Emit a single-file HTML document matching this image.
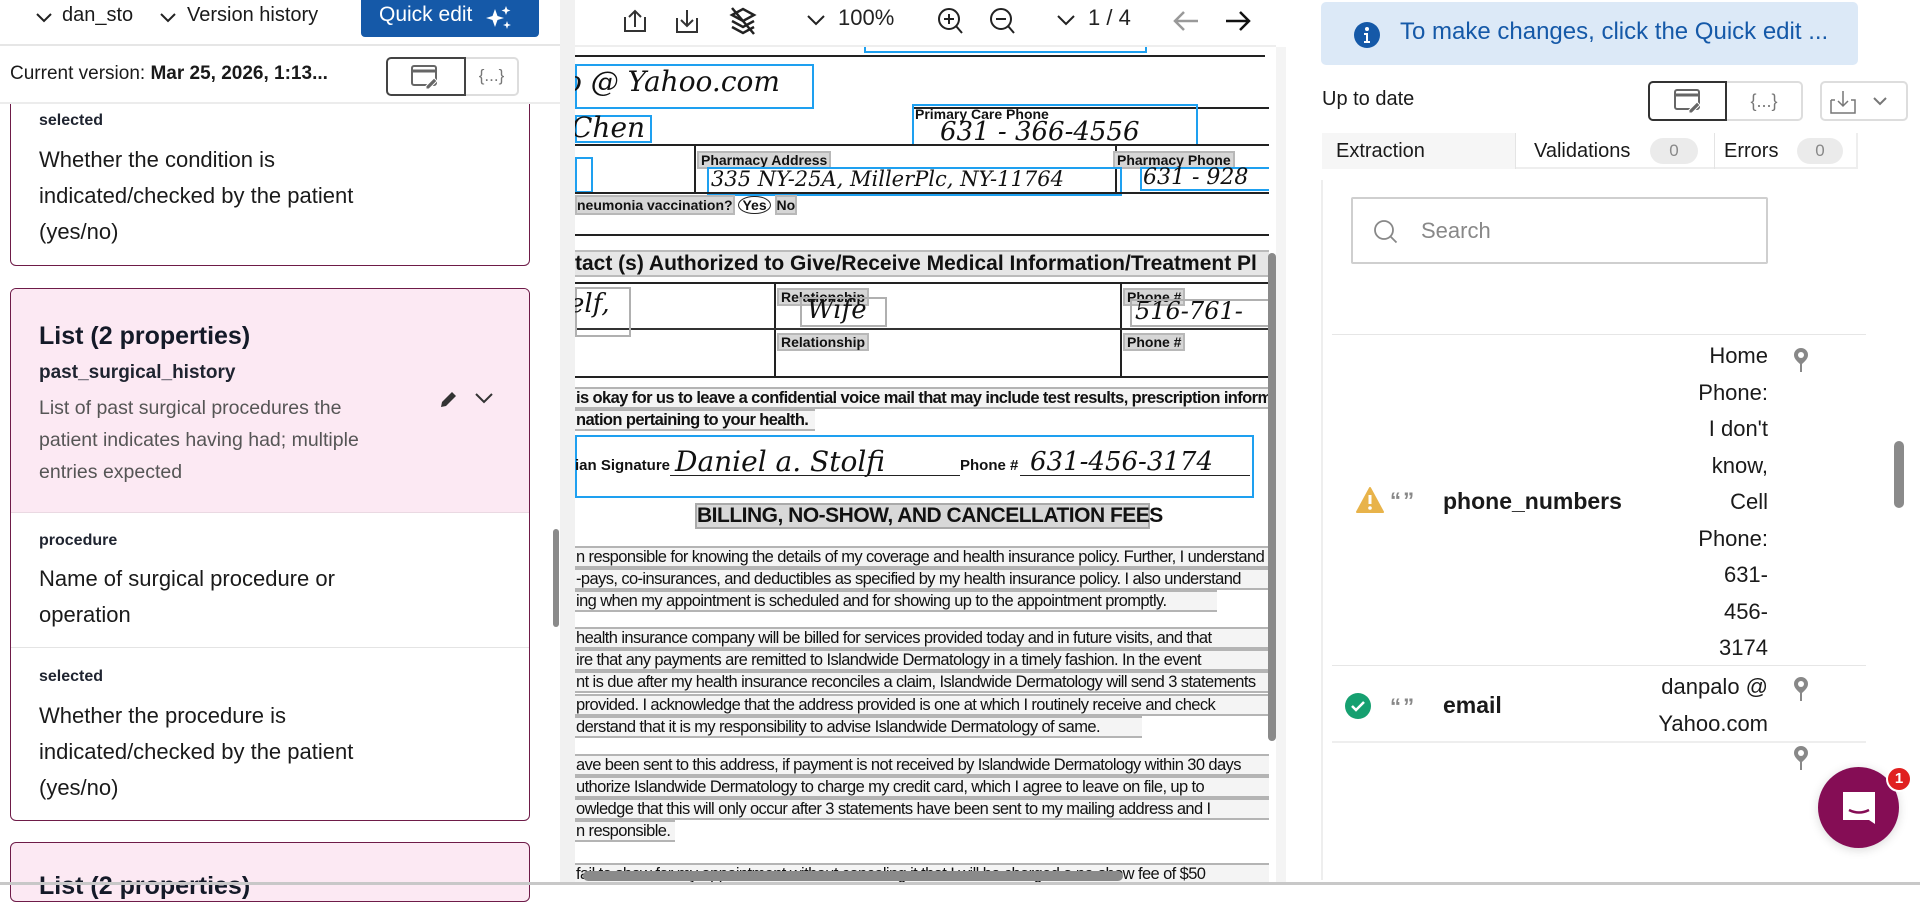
<!DOCTYPE html>
<html><head><meta charset="utf-8">
<style>
*{box-sizing:border-box;margin:0;padding:0}
body{width:1920px;height:885px;overflow:hidden;background:#fff;font-family:"Liberation Sans",sans-serif;color:#1a1a1a;position:relative}
.a{position:absolute;white-space:nowrap}
.doc{position:absolute;left:575px;top:47px;width:694px;height:838px;overflow:hidden;background:#fff}
.d{position:absolute;white-space:nowrap;font-family:"Liberation Sans Narrow","Liberation Sans",sans-serif;font-weight:bold;color:#111}
.hl{background:#d6d6d6;border:2px solid #b8b8b8}
.bl{position:absolute;border:2px solid #1ea0f0}
.gb{position:absolute;border:2px solid #b0b0b0}
.hw{position:absolute;white-space:nowrap;font-family:"DejaVu Serif","Liberation Serif",serif;font-style:italic;color:#111}
.ln{position:absolute;background:#222;height:2px}
.pl{position:absolute;left:0;height:22px;font-family:"Liberation Sans Narrow","Liberation Sans",sans-serif;font-size:16.5px;letter-spacing:-0.6px;line-height:18px;color:#111;white-space:nowrap;border-top:2px solid #b4b4b4;border-bottom:2px solid #b4b4b4;background:#f4f4f4;padding-left:1px;overflow:hidden}
.lbl{font-size:16px;font-weight:bold;color:#1f2430}
.txt{font-size:22px;line-height:36px;color:#1a1a1a}
</style></head><body>

<!-- LEFT PANEL -->
<div class="a" style="left:0;top:0;width:560px;height:46px;border-bottom:2px solid #e6e6e6"></div>
<svg class="a" style="left:34px;top:8px" width="20" height="20" viewBox="0 0 20 20"><path d="M3 6l7 7 7-7" fill="none" stroke="#222" stroke-width="2"/></svg>
<div class="a" style="left:62px;top:4px;font-size:20px;width:72px;overflow:hidden">dan_stolfi</div>
<svg class="a" style="left:158px;top:8px" width="20" height="20" viewBox="0 0 20 20"><path d="M3 6l7 7 7-7" fill="none" stroke="#222" stroke-width="2"/></svg>
<div class="a" style="left:187px;top:4px;font-size:20px">Version history</div>
<div class="a" style="left:361px;top:0;width:178px;height:37px;background:#1559a8;border-radius:0 0 4px 4px;color:#fff;font-size:21px;padding:3px 0 0 18px">Quick edit
<svg style="position:absolute;left:124px;top:5px" width="28" height="26" viewBox="0 0 28 26"><path d="M10 4 L12.5 11 L19 13 L12.5 15 L10 22 L7.5 15 L1 13 L7.5 11Z" fill="#fff"/><path d="M21 1 L22.2 4.3 L25.5 5.5 L22.2 6.7 L21 10 L19.8 6.7 L16.5 5.5 L19.8 4.3Z" fill="#fff"/><path d="M22 16 L23 19 L26 20 L23 21 L22 24 L21 21 L18 20 L21 19Z" fill="#fff"/></svg></div>

<div class="a" style="left:0;top:47px;width:560px;height:57px;border-bottom:2px solid #ececec"></div>
<div class="a" style="left:10px;top:63px;font-size:19px">Current version: <b>Mar 25, 2026, 1:13...</b></div>
<div class="a" style="left:386px;top:57px;width:80px;height:39px;border:2px solid #444;border-radius:5px 0 0 5px"></div>
<svg class="a" style="left:410px;top:64px" width="30" height="26" viewBox="0 0 30 26"><rect x="2" y="2" width="24" height="19" rx="2" fill="none" stroke="#666" stroke-width="2"/><path d="M2 7h24" stroke="#666" stroke-width="3"/><path d="M16 22l8-8 3 3-8 8h-3z" fill="#666" stroke="#fff" stroke-width="1"/></svg>
<div class="a" style="left:466px;top:57px;width:53px;height:39px;border:2px solid #ddd;border-left:none;border-radius:0 5px 5px 0;color:#777;font-size:17px;text-align:center;line-height:34px">{...}</div>

<div class="a" style="left:10px;top:104px;width:520px;height:162px;border:1.5px solid #6e1b48;border-top:none;border-radius:0 0 6px 6px"></div>
<div class="a lbl" style="left:39px;top:112px">selected</div>
<div class="a txt" style="left:39px;top:142px">Whether the condition is<br>indicated/checked by the patient<br>(yes/no)</div>

<div class="a" style="left:10px;top:288px;width:520px;height:533px;border:1.5px solid #6e1b48;border-radius:6px;overflow:hidden">
 <div style="position:absolute;left:0;top:0;width:100%;height:224px;background:#fce9f3;border-bottom:1px solid #ead9e2"></div>
 <div class="a" style="left:28px;top:33px;font-size:25px;font-weight:bold;color:#141a28">List (2 properties)</div>
 <div class="a" style="left:28px;top:73px;font-size:19px;font-weight:bold;color:#1f2430">past_surgical_history</div>
 <div class="a" style="left:28px;top:103px;font-size:19.5px;line-height:32px;color:#555">List of past surgical procedures the<br>patient indicates having had; multiple<br>entries expected</div>
 <svg class="a" style="left:428px;top:100px" width="20" height="20" viewBox="0 0 20 20"><path d="M2 18l1-5 10-10 4 4-10 10z" fill="#333"/></svg>
 <svg class="a" style="left:463px;top:101px" width="20" height="16" viewBox="0 0 20 16"><path d="M2 4l8 8 8-8" fill="none" stroke="#333" stroke-width="2"/></svg>
 <div class="a lbl" style="left:28px;top:243px">procedure</div>
 <div class="a txt" style="left:28px;top:272px">Name of surgical procedure or<br>operation</div>
 <div style="position:absolute;left:0;top:358px;width:100%;height:1px;background:#e4e4e4"></div>
 <div class="a lbl" style="left:28px;top:379px">selected</div>
 <div class="a txt" style="left:28px;top:409px">Whether the procedure is<br>indicated/checked by the patient<br>(yes/no)</div>
</div>
<div class="a" style="left:10px;top:842px;width:520px;height:60px;border:1.5px solid #6e1b48;border-radius:6px;background:#fce9f3"></div>
<div class="a" style="left:39px;top:872px;font-size:25px;font-weight:bold;color:#141a28">List (2 properties)</div>

<!-- gutters -->
<div class="a" style="left:560px;top:0;width:15px;height:885px;background:#f1f1f1"></div>
<div class="a" style="left:553px;top:529px;width:6px;height:98px;background:#8a8a8a;border-radius:3px"></div>
<div class="a" style="left:1269px;top:0;width:53px;height:885px;background:#fff"></div>
<div class="a" style="left:1276px;top:47px;width:10px;height:838px;background:#f4f4f4"></div>

<!-- DOC TOOLBAR -->
<div class="a" style="left:575px;top:0;width:701px;height:47px;background:#fff;border-bottom:2px solid #eee"></div>
<svg class="a" style="left:620px;top:7px" width="30" height="30" viewBox="0 0 30 30"><path d="M5 10v14h20V10" fill="none" stroke="#333" stroke-width="2"/><path d="M9 10l6-6 6 6M15 4v16" fill="none" stroke="#333" stroke-width="2"/></svg>
<svg class="a" style="left:672px;top:6px" width="30" height="30" viewBox="0 0 30 30"><path d="M5 12v14h20V12" fill="none" stroke="#333" stroke-width="2"/><path d="M9 14l6 6 6-6M15 4v16" fill="none" stroke="#333" stroke-width="2"/></svg>
<svg class="a" style="left:728px;top:5px" width="30" height="32" viewBox="0 0 30 32"><path d="M4 10l11-6 11 6-11 6z M4 16l11 6 11-6 M4 22l11 6 11-6" fill="none" stroke="#222" stroke-width="2.5"/><path d="M4 3l22 26" stroke="#222" stroke-width="2.5"/></svg>
<svg class="a" style="left:805px;top:10px" width="22" height="20" viewBox="0 0 22 20"><path d="M3 6l8 8 8-8" fill="none" stroke="#222" stroke-width="2"/></svg>
<div class="a" style="left:838px;top:5px;font-size:22px;color:#222">100%</div>
<svg class="a" style="left:935px;top:5px" width="34" height="34" viewBox="0 0 34 34"><circle cx="14" cy="14" r="10" fill="none" stroke="#222" stroke-width="2"/><path d="M14 9v10M9 14h10M21 21l6 7" stroke="#222" stroke-width="2"/></svg>
<svg class="a" style="left:987px;top:5px" width="34" height="34" viewBox="0 0 34 34"><circle cx="14" cy="14" r="10" fill="none" stroke="#222" stroke-width="2"/><path d="M9 14h10M21 21l6 7" stroke="#222" stroke-width="2"/></svg>
<svg class="a" style="left:1055px;top:10px" width="22" height="20" viewBox="0 0 22 20"><path d="M3 6l8 8 8-8" fill="none" stroke="#222" stroke-width="2"/></svg>
<div class="a" style="left:1088px;top:5px;font-size:22px;color:#222">1 / 4</div>
<svg class="a" style="left:1170px;top:6px" width="32" height="30" viewBox="0 0 32 30"><path d="M28 15H5M14 6l-9 9 9 9" fill="none" stroke="#999" stroke-width="2.5"/></svg>
<svg class="a" style="left:1222px;top:6px" width="32" height="30" viewBox="0 0 32 30"><path d="M4 15h23M18 6l9 9-9 9" fill="none" stroke="#111" stroke-width="2.5"/></svg>

<!-- DOC -->
<div class="doc">
 <div class="ln" style="left:0;top:8px;width:690px"></div>
 <div class="bl" style="left:289px;top:-14px;width:283px;height:20px"></div>
 <div class="bl" style="left:0;top:17px;width:239px;height:45px"></div>
 <div class="hw" style="left:-10px;top:18px;font-size:28px">o @ Yahoo.com</div>
 <div class="ln" style="left:337px;top:60px;width:360px"></div>
 <div class="ln" style="left:337px;top:60px;width:2px;height:38px"></div>
 <div class="bl" style="left:337px;top:57px;width:286px;height:42px"></div>
 <div class="d" style="left:340px;top:59px;font-size:14px">Primary Care Phone</div>
 <div class="hw" style="left:365px;top:70px;font-size:26px">631 - 366-4556</div>
 <div class="bl" style="left:0;top:68px;width:77px;height:28px"></div>
 <div class="hw" style="left:-4px;top:64px;font-size:28px">Chen</div>
 <div class="ln" style="left:0;top:97px;width:697px"></div>
 <div class="ln" style="left:119px;top:98px;width:2px;height:47px"></div>
 <div class="ln" style="left:540px;top:98px;width:2px;height:47px"></div>
 <div class="d hl" style="left:122px;top:104px;font-size:14px;padding:0 2px;line-height:14px">Pharmacy Address</div>
 <div class="d hl" style="left:538px;top:104px;font-size:14px;padding:0 2px;line-height:14px">Pharmacy Phone</div>
 <div class="bl" style="left:132px;top:120px;width:415px;height:29px"></div>
 <div class="hw" style="left:136px;top:120px;font-size:21px">335 NY-25A, MillerPlc, NY-11764</div>
 <div class="bl" style="left:565px;top:120px;width:140px;height:24px"></div>
 <div class="hw" style="left:568px;top:118px;font-size:22px">631 - 928</div>
 <div class="bl" style="left:0;top:110px;width:18px;height:36px"></div>
 <div class="ln" style="left:0;top:145px;width:697px"></div>
 <div class="d" style="left:0;top:150px;font-size:14px"><span class="hl">neumonia vaccination?</span> <span style="border:1.5px solid #222;border-radius:50%;padding:0 3px">Yes</span> <span class="hl">No</span></div>
 <div class="ln" style="left:0;top:187px;width:697px"></div>
 <div class="d" style="left:0;top:203px;width:697px;height:27px;background:#e6e6e6;border-top:2px solid #bbb;border-bottom:2px solid #bbb;font-size:21px;line-height:23px">tact (s) Authorized to Give/Receive Medical Information/Treatment Pl</div>
 <div class="ln" style="left:0;top:235px;width:697px"></div>
 <div class="ln" style="left:199px;top:236px;width:2px;height:94px"></div>
 <div class="ln" style="left:545px;top:236px;width:2px;height:94px"></div>
 <div class="ln" style="left:0;top:281px;width:697px;background:#333"></div>
 <div class="ln" style="left:0;top:329px;width:697px"></div>
 <div class="gb" style="left:0;top:240px;width:56px;height:50px"></div>
 <div class="hw" style="left:-6px;top:242px;font-size:26px">elf,</div>
 <div class="d hl" style="left:202px;top:241px;font-size:14px;padding:0 2px;line-height:14px">Relationship</div>
 <div class="gb" style="left:225px;top:250px;width:87px;height:30px"></div>
 <div class="hw" style="left:232px;top:248px;font-size:26px">Wife</div>
 <div class="d hl" style="left:548px;top:241px;font-size:14px;padding:0 2px;line-height:14px">Phone #</div>
 <div class="gb" style="left:555px;top:252px;width:140px;height:28px"></div>
 <div class="hw" style="left:560px;top:250px;font-size:24px">516-761-</div>
 <div class="d hl" style="left:202px;top:286px;font-size:14px;padding:0 2px;line-height:14px">Relationship</div>
 <div class="d hl" style="left:548px;top:286px;font-size:14px;padding:0 2px;line-height:14px">Phone #</div>
 <div class="pl" style="top:340px;width:697px;font-weight:bold">is okay for us to leave a confidential voice mail that may include test results, prescription information</div>
 <div class="pl" style="top:362px;width:240px;font-weight:bold">nation pertaining to your health.</div>
 <div class="bl" style="left:0;top:388px;width:679px;height:63px"></div>
 <div class="d" style="left:0;top:410px;font-size:15px">ian Signature</div>
 <div class="ln" style="left:95px;top:428px;width:290px;height:1px"></div>
 <div class="hw" style="left:100px;top:398px;font-size:28px">Daniel a. Stolfi</div>
 <div class="d" style="left:385px;top:410px;font-size:15px">Phone #</div>
 <div class="ln" style="left:445px;top:428px;width:230px;height:1px"></div>
 <div class="hw" style="left:455px;top:400px;font-size:26px">631-456-3174</div>
 <div class="d" style="left:120px;top:456px;width:455px;height:26px;background:#d8d8d8;border:2px solid #aaa;font-size:21px;line-height:22px;text-align:center;letter-spacing:-0.5px">BILLING, NO-SHOW, AND CANCELLATION FEES</div>
 <div class="pl" style="top:499px;width:697px">n responsible for knowing the details of my coverage and health insurance policy.  Further, I understand</div>
 <div class="pl" style="top:521px;width:697px">-pays, co-insurances, and deductibles as specified by my health insurance policy.  I also understand</div>
 <div class="pl" style="top:543px;width:642px">ing when my appointment is scheduled and for showing up to the appointment promptly.</div>
 <div class="pl" style="top:580px;width:697px">health insurance company will be billed for services provided today and in future visits, and that</div>
 <div class="pl" style="top:602px;width:697px">ire that any payments are remitted to Islandwide Dermatology in a timely fashion.  In the event</div>
 <div class="pl" style="top:624px;width:697px">nt is due after my health insurance reconciles a claim, Islandwide Dermatology will send 3 statements</div>
 <div class="pl" style="top:647px;width:697px"> provided.  I acknowledge that the address provided is one at which I routinely receive and check</div>
 <div class="pl" style="top:669px;width:567px">derstand that it is my responsibility to advise Islandwide Dermatology of same.</div>
 <div class="pl" style="top:707px;width:697px">ave been sent to this address, if payment is not received by Islandwide Dermatology within 30 days</div>
 <div class="pl" style="top:729px;width:697px">uthorize Islandwide Dermatology to charge my credit card, which I agree to leave on file, up to</div>
 <div class="pl" style="top:751px;width:697px">owledge that this will only occur after 3 statements have been sent to my mailing address and I</div>
 <div class="pl" style="top:773px;width:100px">n responsible.</div>
 <div class="pl" style="top:816px;width:697px">fail to show for my appointment without canceling it that I will be charged a no-show fee of $50</div>
</div>
<div class="a" style="left:1268px;top:253px;width:8px;height:488px;background:#8a8a8a;border-radius:4px"></div>
<div class="a" style="left:583px;top:871px;width:540px;height:10px;background:#8a8a8a;border-radius:5px"></div>

<!-- RIGHT PANEL -->
<div class="a" style="left:1321px;top:2px;width:537px;height:63px;background:#dce9f7;border-radius:5px"></div>
<svg class="a" style="left:1353px;top:21px" width="28" height="28" viewBox="0 0 28 28"><circle cx="14" cy="14" r="13" fill="#1559a8"/><circle cx="14" cy="8" r="2" fill="#fff"/><path d="M11 12h4v8h2v2h-6v-2h2v-6h-2z" fill="#fff"/></svg>
<div class="a" style="left:1400px;top:18px;font-size:24px;color:#1559a8">To make changes, click the Quick edit ...</div>
<div class="a" style="left:1322px;top:88px;font-size:20px">Up to date</div>
<div class="a" style="left:1648px;top:81px;width:79px;height:40px;border:2px solid #333;border-radius:5px 0 0 5px"></div>
<svg class="a" style="left:1673px;top:87px" width="30" height="28" viewBox="0 0 30 28"><rect x="2" y="3" width="24" height="19" rx="2" fill="none" stroke="#666" stroke-width="2"/><path d="M2 8h24" stroke="#666" stroke-width="3"/><path d="M16 23l8-8 3 3-8 8h-3z" fill="#666" stroke="#fff" stroke-width="1"/></svg>
<div class="a" style="left:1727px;top:81px;width:76px;height:40px;border:2px solid #ddd;border-left:none;border-radius:0 5px 5px 0;color:#777;font-size:18px;text-align:center;line-height:36px">{...}</div>
<div class="a" style="left:1820px;top:81px;width:88px;height:40px;border:2px solid #ddd;border-radius:5px"></div>
<svg class="a" style="left:1828px;top:88px" width="72" height="28" viewBox="0 0 72 28"><path d="M3 12v13h24V12l-4 0M7 12l-4 0" fill="none" stroke="#777" stroke-width="1.5"/><path d="M15 3v15M10 13l5 5 5-5" fill="none" stroke="#777" stroke-width="1.5"/><path d="M46 10l6 6 6-6" fill="none" stroke="#777" stroke-width="2"/></svg>

<div class="a" style="left:1322px;top:133px;width:536px;height:36px;border-bottom:2px solid #eee;border-right:2px solid #eee"></div>
<div class="a" style="left:1322px;top:133px;width:193px;height:36px;background:#f6f6f6"></div>
<div class="a" style="left:1336px;top:140px;font-size:20px">Extraction</div>
<div class="a" style="left:1515px;top:133px;width:1px;height:36px;background:#e4e4e4"></div>
<div class="a" style="left:1534px;top:140px;font-size:20px">Validations</div>
<div class="a" style="left:1650px;top:138px;width:48px;height:26px;background:#ebebeb;border-radius:13px;color:#888;font-size:17px;text-align:center;line-height:26px">0</div>
<div class="a" style="left:1714px;top:133px;width:1px;height:36px;background:#e4e4e4"></div>
<div class="a" style="left:1724px;top:140px;font-size:20px">Errors</div>
<div class="a" style="left:1797px;top:138px;width:46px;height:26px;background:#ebebeb;border-radius:13px;color:#888;font-size:17px;text-align:center;line-height:26px">0</div>

<div class="a" style="left:1321px;top:180px;width:2px;height:700px;background:#eee"></div>
<div class="a" style="left:1351px;top:197px;width:417px;height:67px;border:2px solid #cfcfcf;border-radius:2px"></div>
<svg class="a" style="left:1372px;top:218px" width="28" height="28" viewBox="0 0 28 28"><circle cx="12" cy="12" r="9" fill="none" stroke="#888" stroke-width="1.8"/><path d="M18.5 18.5l6 6" stroke="#888" stroke-width="1.8"/></svg>
<div class="a" style="left:1421px;top:218px;font-size:22px;color:#888">Search</div>

<div class="a" style="left:1332px;top:334px;width:534px;height:1px;background:#e6e6e6"></div>
<div class="a" style="left:1600px;top:338px;width:168px;font-size:22px;line-height:36.5px;text-align:right;white-space:normal">Home<br>Phone:<br>I don't<br>know,<br>Cell<br>Phone:<br>631-<br>456-<br>3174</div>
<svg class="a" style="left:1355px;top:486px" width="30" height="28" viewBox="0 0 30 28"><path d="M15 2L28 26H2z" fill="#e8b34a" stroke="#e8b34a" stroke-width="2" stroke-linejoin="round"/><path d="M15 9v9" stroke="#fff" stroke-width="3"/><circle cx="15" cy="22" r="1.8" fill="#fff"/></svg>
<div class="a" style="left:1390px;top:488px;font-size:22px;color:#888;font-weight:bold;letter-spacing:-2px">“ ”</div>
<div class="a" style="left:1443px;top:488px;font-size:23px;font-weight:bold">phone_numbers</div>
<div class="a" style="left:1332px;top:665px;width:534px;height:1px;background:#e6e6e6"></div>
<div class="a" style="left:1580px;top:669px;width:188px;font-size:22px;line-height:36.5px;text-align:right;white-space:normal">danpalo @<br>Yahoo.com</div>
<svg class="a" style="left:1344px;top:692px" width="28" height="28" viewBox="0 0 28 28"><circle cx="14" cy="14" r="13" fill="#16a070"/><path d="M8 14l4 4 8-8" fill="none" stroke="#fff" stroke-width="2.5"/></svg>
<div class="a" style="left:1390px;top:694px;font-size:22px;color:#888;font-weight:bold;letter-spacing:-2px">“ ”</div>
<div class="a" style="left:1443px;top:692px;font-size:23px;font-weight:bold">email</div>
<div class="a" style="left:1332px;top:741px;width:534px;height:2px;background:#eee"></div>
<svg class="a" style="left:1790px;top:346px" width="22" height="28" viewBox="0 0 22 28"><path d="M11 2a7 7 0 0 1 7 7c0 4-4 7-6 9v8h-2v-8c-2-2-6-5-6-9a7 7 0 0 1 7-7z" fill="#888"/><circle cx="11" cy="9" r="3" fill="#fff"/></svg>
<svg class="a" style="left:1790px;top:675px" width="22" height="28" viewBox="0 0 22 28"><path d="M11 2a7 7 0 0 1 7 7c0 4-4 7-6 9v8h-2v-8c-2-2-6-5-6-9a7 7 0 0 1 7-7z" fill="#888"/><circle cx="11" cy="9" r="3" fill="#fff"/></svg>
<svg class="a" style="left:1790px;top:744px" width="22" height="28" viewBox="0 0 22 28"><path d="M11 2a7 7 0 0 1 7 7c0 4-4 7-6 9v8h-2v-8c-2-2-6-5-6-9a7 7 0 0 1 7-7z" fill="#888"/><circle cx="11" cy="9" r="3" fill="#fff"/></svg>
<div class="a" style="left:1894px;top:441px;width:10px;height:67px;background:#8a8a8a;border-radius:5px"></div>

<div class="a" style="left:1818px;top:767px;width:81px;height:81px;border-radius:50%;background:#850d55;box-shadow:0 2px 10px rgba(0,0,0,.15)"></div>
<svg class="a" style="left:1839px;top:788px" width="40" height="40" viewBox="0 0 40 40"><path d="M4 4h32v32l-6-4H4z" fill="#fff"/><path d="M10 22q10 5 20 0" fill="none" stroke="#850d55" stroke-width="2.5"/></svg>
<div class="a" style="left:1886px;top:766px;width:26px;height:26px;border-radius:50%;background:#e02020;border:2px solid #fff;color:#fff;font-weight:bold;font-size:15px;text-align:center;line-height:22px">1</div>

<div class="a" style="left:0;top:882px;width:1920px;height:3px;background:#c8c8c8"></div>
</body></html>
